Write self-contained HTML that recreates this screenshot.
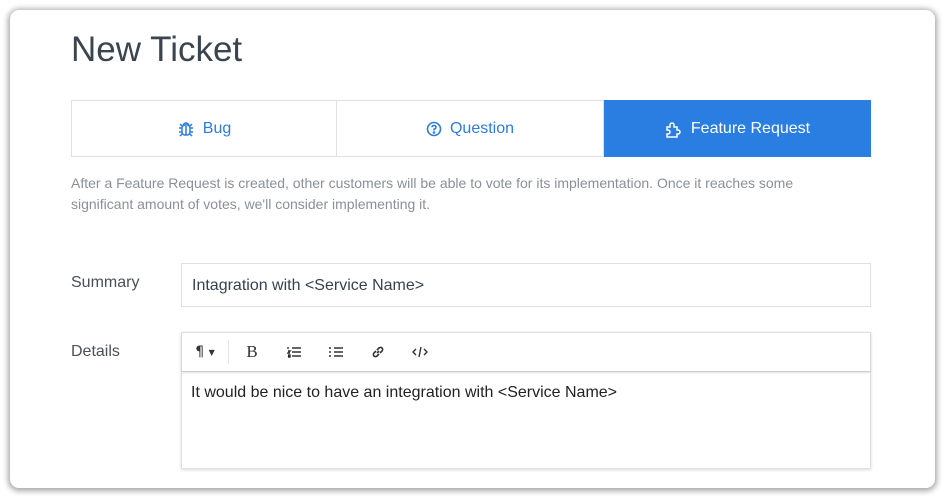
<!DOCTYPE html>
<html><head><style>
body{margin:0;width:945px;height:498px;background:#fff;font-family:"Liberation Sans",sans-serif;overflow:hidden;position:relative}
.card{position:absolute;left:10px;top:10px;width:925px;height:478px;background:#fff;border-radius:9px;box-shadow:0 1px 6px 2px rgba(0,0,0,.35);overflow:hidden}
h1{position:absolute;left:61px;top:20px;margin:0;font-weight:normal;font-size:35px;color:#3a4550}
.tabs{position:absolute;left:61px;top:90px;width:800px;height:57px;display:flex}
.tab{display:flex;align-items:center;justify-content:center;gap:8px;font-size:16px;color:#2a7de1;border:1px solid #dde1e5;box-sizing:border-box;height:57px}
.t1{width:266px}.t2{width:267px;border-left:none}.t3{width:267px;background:#2a7de1;color:#fff;border-color:#2a7de1}
.desc{position:absolute;left:61px;top:163px;width:755px;font-size:14px;line-height:21px;color:#8a9099}
.lbl{position:absolute;left:61px;font-size:16px;color:#4a5058}
.inp{position:absolute;left:171px;top:253px;width:690px;height:44px;border:1px solid #dde1e5;box-sizing:border-box;font-size:16px;color:#36424f;padding:13px 10px}
.ed{position:absolute;left:171px;top:322px;width:690px;height:137px;border:1px solid #dde1e5;box-sizing:border-box;box-shadow:0 1px 3px rgba(0,0,0,.15)}
.tb{height:38px;border-bottom:1px solid #ccc;box-shadow:0 1px 2px rgba(0,0,0,.12);display:flex;align-items:center;font-size:15px;color:#333}
.tb span{display:inline-flex;justify-content:center;align-items:center}
.txt{padding:12px 9px;font-size:16px;color:#222}
</style></head><body>
<div class="card">
<h1>New Ticket</h1>
<div class="tabs">
<div class="tab t1"><svg width="18" height="18" viewBox="0 0 18 18" fill="none" stroke="#2a7de1" stroke-width="1.5"><rect x="5" y="5" width="8" height="10" rx="3"/><path d="M6 5Q9 1 12 5M9 6v9M2 8h3M13 8h3M2 12h3M13 12h3M3 4l2 2M15 4l-2 2M3 16l2-2M15 16l-2-2"/></svg>Bug</div>
<div class="tab t2"><svg width="16" height="16" viewBox="0 0 16 16" fill="none" stroke="#2a7de1" stroke-width="1.6"><circle cx="8" cy="8" r="6.5"/><path d="M6 6.3Q6 4.5 8 4.5T10 6.3Q10 7.5 8 8.3v1.2"/><circle cx="8" cy="11.5" r=".5" fill="#2a7de1"/></svg>Question</div>
<div class="tab t3"><svg width="18" height="18" viewBox="0 0 18 18" fill="none" stroke="#fff" stroke-width="1.5"><path d="M2 7h3V5a2 2 0 0 1 4 0v2h3v3h1a2 2 0 0 1 0 4h-1v3H2v-3h1a2 2 0 0 0 0-4H2z"/></svg>Feature Request</div>
</div>
<div class="desc">After a Feature Request is created, other customers will be able to vote for its implementation. Once it reaches some significant amount of votes, we'll consider implementing it.</div>
<div class="lbl" style="top:264px">Summary</div>
<div class="inp">Intagration with &lt;Service Name&gt;</div>
<div class="lbl" style="top:333px">Details</div>
<div class="ed">
<div class="tb"><span style="width:46px;height:24px;border-right:1px solid #e5e5e5;font-family:'DejaVu Sans';font-size:14px">¶&nbsp;<small style="font-size:8px">▼</small></span><span style="width:46px;font-family:'Liberation Serif';font-size:17px">B</span>
<span style="width:38px"><svg width="14" height="12" viewBox="0 0 14 12" stroke="#333" stroke-width="1.4"><path d="M5 2h9M5 6h9M5 10h9M1 1v2M1 5h2L1 7h2M1 9h2v2H1"/></svg></span>
<span style="width:46px"><svg width="14" height="12" viewBox="0 0 14 12" stroke="#333" stroke-width="1.4"><path d="M5 2h9M5 6h9M5 10h9M0 2h2M0 6h2M0 10h2"/></svg></span>
<span style="width:38px"><svg width="14" height="14" viewBox="0 0 14 14" fill="none" stroke="#333" stroke-width="1.6"><path d="M6 8l2-2M5 6L3 8a2 2 0 0 0 3 3l2-2M9 8l2-2a2 2 0 0 0-3-3L6 5"/></svg></span>
<span style="width:46px"><svg width="16" height="12" viewBox="0 0 16 12" fill="none" stroke="#333" stroke-width="1.4"><path d="M4 3L1 6l3 3M12 3l3 3-3 3M9 1L7 11"/></svg></span></div>
<div class="txt">It would be nice to have an integration with &lt;Service Name&gt;</div>
</div>
</div>
</body></html>
